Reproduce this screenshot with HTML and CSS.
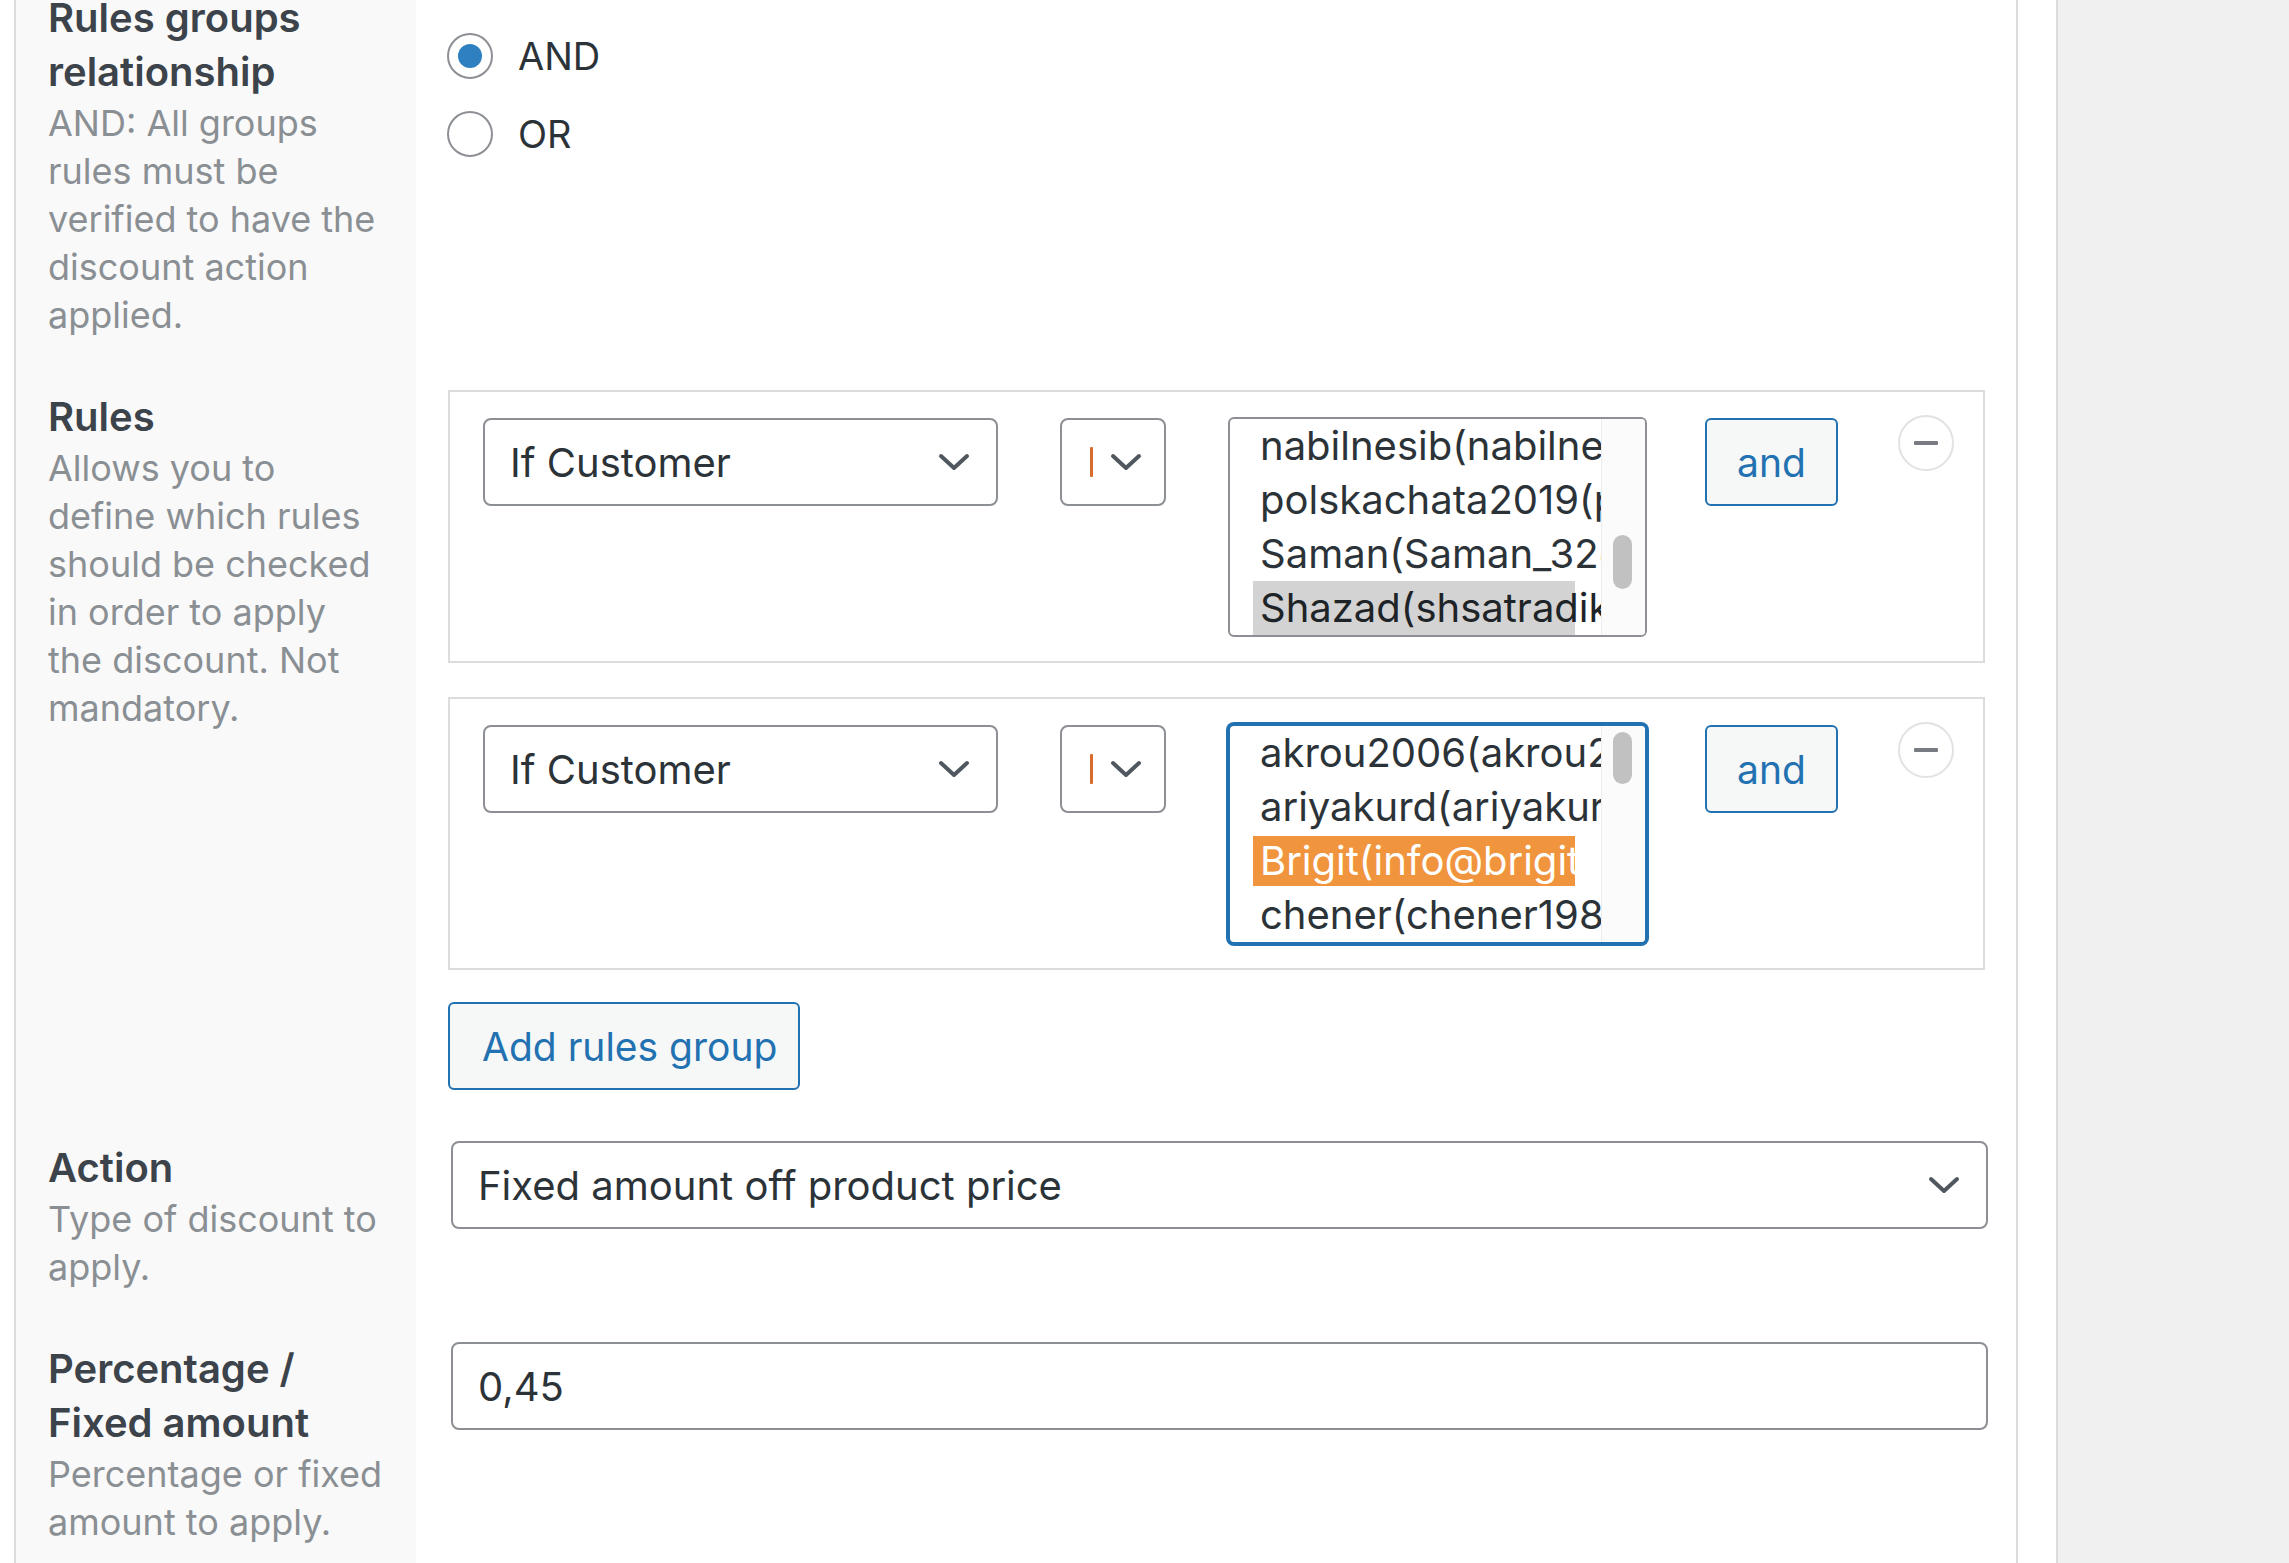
FILE: index.html
```html
<!DOCTYPE html>
<html lang="en">
<head>
<meta charset="utf-8">
<title>Discount rules</title>
<link rel="stylesheet" href="styles.css">
</head>
<body>
<div class="screen">
  <div class="postbox">
    <div class="panel">
      <div class="form-table">

        <div class="th">
          <div class="label">Rules groups<br>relationship</div>
          <p class="desc">AND: All groups<br>rules must be<br>verified to have the<br>discount action<br>applied.</p>
        </div>
        <div class="td">
          <div class="radios">
            <label class="radio-row"><span class="radio checked"></span><span class="radio-text">AND</span></label>
            <label class="radio-row"><span class="radio"></span><span class="radio-text">OR</span></label>
          </div>
        </div>

        <div class="th">
          <div class="label">Rules</div>
          <p class="desc">Allows you to<br>define which rules<br>should be checked<br>in order to apply<br>the discount. Not<br>mandatory.</p>
        </div>
        <div class="td">
          <div class="group">
            <div class="select cond"><span class="sel-text">If Customer</span><svg class="chev" viewBox="0 0 32 20"><polyline points="3,4 16,16 29,4"/></svg></div>
            <div class="select op"><span class="op-mark"></span><svg class="chev" viewBox="0 0 32 20"><polyline points="3,4 16,16 29,4"/></svg></div>
            <div class="multi">
              <div class="options">
                <div class="opt">nabilnesib(nabilnesib@gmail.com)</div>
                <div class="opt">polskachata2019(polskachata2019@gmail.com)</div>
                <div class="opt">Saman(Saman_32@gmail.com)</div>
                <div class="opt sel-gray">Shazad(shsatradikg@gmail.com)</div>
              </div>
              <div class="track"><div class="thumb thumb-low"></div></div>
            </div>
            <button class="btn and-btn" type="button">and</button>
            <span class="minus"><span class="minus-bar"></span></span>
          </div>

          <div class="group group-next">
            <div class="select cond"><span class="sel-text">If Customer</span><svg class="chev" viewBox="0 0 32 20"><polyline points="3,4 16,16 29,4"/></svg></div>
            <div class="select op"><span class="op-mark"></span><svg class="chev" viewBox="0 0 32 20"><polyline points="3,4 16,16 29,4"/></svg></div>
            <div class="multi focused">
              <div class="options">
                <div class="opt">akrou2006(akrou2006@gmail.com)</div>
                <div class="opt">ariyakurd(ariyakurd@gmail.com)</div>
                <div class="opt sel-orange">Brigit(info@brigit-design.de)</div>
                <div class="opt">chener(chener1985@gmail.com)</div>
              </div>
              <div class="track"><div class="thumb thumb-top"></div></div>
            </div>
            <button class="btn and-btn" type="button">and</button>
            <span class="minus"><span class="minus-bar"></span></span>
          </div>

          <button class="btn add-btn" type="button">Add rules group</button>
        </div>

        <div class="th">
          <div class="label">Action</div>
          <p class="desc">Type of discount to<br>apply.</p>
        </div>
        <div class="td">
          <div class="select wide"><span class="sel-text">Fixed amount off product price</span><svg class="chev" viewBox="0 0 32 20"><polyline points="3,4 16,16 29,4"/></svg></div>
        </div>

        <div class="th">
          <div class="label">Percentage /<br>Fixed amount</div>
          <p class="desc">Percentage or fixed<br>amount to apply.</p>
        </div>
        <div class="td">
          <div class="input wide">0,45</div>
        </div>

      </div>
    </div>
  </div>
</div>
</body>
</html>
```

FILE: styles.css
```css
* { box-sizing: border-box; }

html, body {
  margin: 0;
  height: 100%;
  overflow: hidden;
  background: #f0f0f1;
  font-family: Inter, "Noto Sans", "Liberation Sans", sans-serif;
  color: #2c3338;
}

.screen {
  display: flex;
  height: 100%;
}

.postbox {
  width: 2058px;
  background: #ffffff;
  border-right: 2px solid #dcdcde;
  padding-left: 14px;
  padding-right: 38px;
}

.panel {
  height: calc(100% + 35px);
  margin-top: -35px;
  border-left: 2px solid #dcdcde;
  border-right: 2px solid #dcdcde;
  background: #ffffff;
}

.form-table {
  display: grid;
  grid-template-columns: 400px 1600px;
  height: 100%;
  grid-auto-rows: min-content;
  background: linear-gradient(to right, #f9f9f9 400px, #ffffff 400px);
}

.th {
  padding: 26px 10px 25px 32px;
  background: #f9f9f9;
}

.td {
  padding: 26px 28px 25px 32px;
}

.label {
  font-size: 40px;
  font-weight: 600;
  line-height: 54px;
  color: #3c434a;
}

.desc {
  margin: 0;
  font-size: 36px;
  line-height: 48px;
  color: #8a8f94;
  white-space: nowrap;
}

/* radios */
.radios {
  margin-top: 26px;
  display: flex;
  flex-direction: column;
}

.radio-row {
  height: 78px;
  display: flex;
  align-items: center;
  gap: 25px;
  margin-left: -1px;
}

.radio {
  width: 46px;
  height: 46px;
  border-radius: 50%;
  border: 2px solid #8c8f94;
  background: #ffffff;
  display: flex;
  align-items: center;
  justify-content: center;
}

.radio.checked::after {
  content: "";
  width: 24px;
  height: 24px;
  border-radius: 50%;
  background: #2f80c1;
}

.radio-text {
  font-size: 38px;
  color: #2c3338;
}

/* rule groups */
.group {
  display: flex;
  align-items: flex-start;
  border: 2px solid #dcdcde;
  padding: 26px 29px 24px 33px;
  margin-right: 3px;
}

.group-next {
  margin-top: 34px;
}

.select, .input {
  height: 88px;
  border: 2px solid #8c8f94;
  border-radius: 8px;
  background: #ffffff;
  display: flex;
  align-items: center;
  font-size: 40px;
  color: #2c3338;
}

.sel-text {
  padding-left: 25px;
  white-space: nowrap;
}

.chev {
  width: 32px;
  height: 20px;
  fill: none;
  stroke: #50575e;
  stroke-width: 4;
  stroke-linecap: round;
  stroke-linejoin: round;
  margin-left: auto;
  flex: none;
}

.cond {
  width: 515px;
  padding-right: 26px;
}

.op {
  width: 106px;
  margin-left: 62px;
  padding: 0 22px 0 28px;
}

.op-mark {
  width: 3px;
  height: 30px;
  background: #d96b2b;
  border-radius: 1px;
}

.multi {
  width: 419px;
  height: 220px;
  margin-left: 62px;
  margin-top: -1px;
  border: 2px solid #8c8f94;
  border-radius: 6px;
  background: #ffffff;
  display: flex;
  overflow: hidden;
}

.multi.focused {
  border-color: #2271b1;
  box-shadow: 0 0 0 2px #2271b1;
}

.options {
  width: 371px;
  padding-left: 23px;
  overflow: hidden;
  font-size: 40px;
}

.opt {
  width: 322px;
  height: 54px;
  line-height: 54px;
  padding-left: 7px;
  white-space: nowrap;
  color: #2c3338;
}

.sel-gray {
  background: #d3d3d3;
  color: #1d2327;
}

.sel-orange {
  background: #f0953d;
  color: #ffffff;
  height: 50px;
  line-height: 50px;
  margin: 2px 0;
}

.track {
  flex: 1;
  border-left: 1px solid #ececec;
  background: #fbfbfb;
  padding-left: 11px;
}

.thumb {
  width: 19px;
  border-radius: 10px;
  background: #c1c1c1;
}

.thumb-low {
  height: 54px;
  margin-top: 116px;
}

.thumb-top {
  height: 52px;
  margin-top: 6px;
}

.btn {
  font-family: inherit;
  font-size: 39px;
  color: #2271b1;
  background: #f6f7f7;
  border: 2px solid #2271b1;
  border-radius: 6px;
  height: 88px;
  cursor: pointer;
}

.and-btn {
  width: 133px;
  margin-left: 58px;
  padding: 0;
}

.minus {
  width: 56px;
  height: 56px;
  margin-left: 60px;
  margin-top: -3px;
  border-radius: 50%;
  border: 2px solid #e2e2e4;
  background: #ffffff;
  display: flex;
  align-items: center;
  justify-content: center;
  flex: none;
}

.minus-bar {
  width: 24px;
  height: 4px;
  border-radius: 1px;
  background: #787c82;
}

.add-btn {
  display: block;
  margin-top: 32px;
  width: 352px;
  padding: 0 0 0 32px;
  text-align: left;
}

.wide {
  margin-left: 3px;
}

.select.wide {
  padding-right: 26px;
}

.input {
  padding-left: 25px;
}
```
